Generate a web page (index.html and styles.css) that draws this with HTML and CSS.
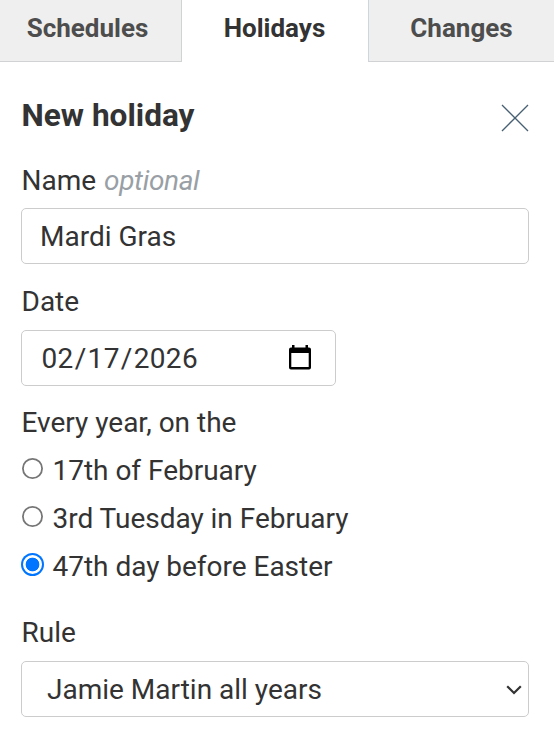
FILE: index.html
```html
<!DOCTYPE html>
<html lang="en-US">

<head>
    <meta charset="UTF-8">
    <meta name="viewport" content="width=device-width, initial-scale=1.0">
    <title>New holiday</title>
    <link rel="stylesheet" href="styles.css">
</head>

<body>
    <nav class="tabs">
        <a class="tab tab-first">Schedules</a>
        <a class="tab active">Holidays</a>
        <a class="tab tab-last">Changes</a>
    </nav>
    <form class="holiday-form">
        <div class="form-header">
            <h2>New holiday</h2>
            <button type="button" class="close" aria-label="Close">
                <svg width="28" height="28" viewBox="0 0 28 28">
                    <path d="M1 1L27 27M27 1L1 27" fill="none" stroke="#465f73" stroke-width="1.3"/>
                </svg>
            </button>
        </div>
        <div class="field field-name">
            <label for="name">Name <i>optional</i></label>
            <input class="control" type="text" id="name" value="Mardi Gras">
        </div>
        <div class="field field-date">
            <label for="date">Date</label>
            <div class="control date-control">
                <input class="date-input" type="date" id="date" value="2026-02-17">
                <svg class="calendar" width="22" height="25" viewBox="0 0 22 25">
                    <path d="M3 0h2.500v2.500h11V0H19v2.500h1a2 2 0 0 1 2 2V22.500a2 2 0 0 1-2 2H2a2 2 0 0 1-2-2V4.500a2 2 0 0 1 2-2h1zM2.300 8v14h17.400V8z" fill="#000" fill-rule="evenodd"/>
                </svg>
            </div>
        </div>
        <div class="field field-repeat">
            <span class="label">Every year, on the</span>
            <label class="option"><input type="radio" name="repeat">17th of February</label>
            <label class="option"><input type="radio" name="repeat">3rd Tuesday in February</label>
            <label class="option"><input type="radio" name="repeat" checked>47th day before Easter</label>
        </div>
        <div class="field">
            <label for="rule">Rule</label>
            <div class="control select-control">
                <select id="rule">
                    <option>Jamie Martin all years</option>
                </select>
                <svg width="16" height="10" viewBox="0 0 16 10">
                    <path d="M1.200 1.200L8 8L14.800 1.200" fill="none" stroke="#333" stroke-width="2.200"/>
                </svg>
            </div>
        </div>
    </form>
</body>

</html>
```

FILE: styles.css
```css
* {
    box-sizing: border-box;
}

body {
    font-family: Roboto, sans-serif;
    font-size: 28px;
    line-height: 33px;
    color: #333;
    background-color: #fff;
    margin: 0;
    overflow: hidden;
}

.tabs {
    display: grid;
    grid-template-columns: 182px 186px 186px;
    height: 62px;
}

.tab {
    display: flex;
    justify-content: center;
    align-items: center;
    padding-bottom: 5px;
    font-size: 26px;
    font-weight: bold;
    color: #4d4d4d;
    background-color: #efefef;
    border-bottom: 1px solid #d0d2d4;
}

.tab-first {
    padding-right: 6px;
    border-right: 1px solid #d0d2d4;
}

.tab-last {
    border-left: 1px solid #ccd6e0;
}

.tab.active {
    color: #333;
    background-color: #fff;
    border-bottom: none;
    padding-bottom: 6px;
    padding-right: 1px;
}

.holiday-form {
    padding: 34px 25px 0 21px;
}

.form-header {
    display: flex;
    justify-content: space-between;
    height: 68px;
}

.form-header h2 {
    font-size: 31.6px;
    line-height: 40px;
    margin: 0;
    padding-left: 0.5px;
}

.close {
    height: 28px;
    margin-top: 8px;
    padding: 0;
    border: none;
    background: none;
    cursor: pointer;
}

.close svg,
.date-control svg,
.select-control svg {
    display: block;
}

.calendar {
    margin-bottom: 2px;
}

.field {
    display: flex;
    flex-direction: column;
    gap: 12px;
}

.field > label,
.field > .label {
    padding-left: 0.5px;
}

.field-name {
    gap: 11px;
    margin-bottom: 21px;
}

.field-date {
    margin-bottom: 20px;
}

.field-repeat {
    gap: 0;
    margin-bottom: 26px;
}

.field-repeat .label {
    margin-bottom: 7px;
}

.field i {
    margin-left: 1px;
    letter-spacing: -0.35px;
    color: #999fa5;
}

.control {
    width: 100%;
    height: 56px;
    padding: 0 18px;
    font: inherit;
    color: inherit;
    background-color: #fff;
    border: 1px solid #ccc;
    border-radius: 5px;
}

.date-control {
    display: flex;
    align-items: center;
    justify-content: space-between;
    width: 315px;
    padding-right: 24px;
}

.date-input {
    width: 200px;
    padding: 0 0 0 0.5px;
    border: none;
    font: inherit;
    letter-spacing: 0.35px;
    color: inherit;
    background: none;
}

.date-input::-webkit-calendar-picker-indicator {
    display: none;
}

.field .option {
    display: flex;
    align-items: center;
    height: 48px;
    padding-left: 1px;
    letter-spacing: -0.02px;
}

.option input {
    appearance: none;
    width: 21px;
    height: 21px;
    margin: 0 9.5px 3px 0;
    border-radius: 50%;
    box-shadow: inset 0 0 0 1.8px #767676;
}

.option input:checked {
    width: 23px;
    height: 23px;
    margin: 0 8.5px 3px -1px;
    background: radial-gradient(circle, #0075ff 6.5px, #fff 7.2px);
    box-shadow: inset 0 0 0 2px #0075ff;
}

.select-control {
    display: flex;
    align-items: center;
    padding: 0 6px 0 25px;
}

.select-control svg {
    margin-top: 2px;
}

.select-control select {
    appearance: none;
    flex: 1;
    padding: 0;
    border: none;
    font: inherit;
    color: inherit;
    background: none;
}
```
